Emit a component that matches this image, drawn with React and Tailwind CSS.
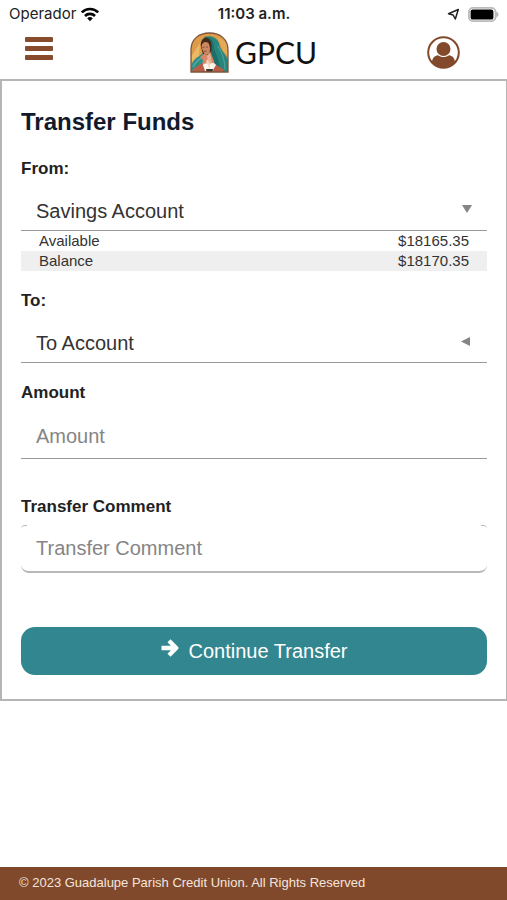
import { useState } from 'react'

function StatusBar() {
  return (
    <div className="grid h-7 grid-cols-3 items-center pl-[9px] pr-2 font-['Inter',sans-serif] text-[15px] text-[#222]">
      <div className="flex items-center gap-1">
        <span className="leading-7">Operador</span>
        <svg width="20" height="15" viewBox="0 0 20 15" fill="none" stroke="#050505" strokeWidth="2.7" aria-hidden="true">
          <path d="M1.8 5.4a11.6 11.6 0 0 1 16.4 0" />
          <path d="M5 9a7.1 7.1 0 0 1 10 0" />
          <path d="M10 14.2 7.2 11.3a4 4 0 0 1 5.6 0Z" fill="#050505" stroke="none" />
        </svg>
      </div>
      <span className="text-center font-semibold leading-7">11:03 a.m.</span>
      <div className="flex items-center justify-end gap-2">
        <svg width="13" height="13" viewBox="0 0 13 13" fill="none" stroke="#222" strokeWidth="1.5" strokeLinejoin="round" aria-hidden="true">
          <path d="M11.3 1.500 1.500 5.800l4.600 1.200 2.200 4Z" />
        </svg>
        <svg width="31" height="15" viewBox="0 0 31 15" aria-hidden="true">
          <rect x="0.9" y="0.9" width="26.600" height="13.200" rx="4" fill="#fff" stroke="#bbb" strokeWidth="1.8" />
          <rect x="2.6" y="2.4" width="22.8" height="10.2" rx="2.2" fill="#000" />
          <path d="M28.2 4.600v5.800c1.300-.5 2.300-1.600 2.300-2.900S29.500 5.100 28.200 4.600Z" fill="#b5b5b5" />
        </svg>
      </div>
    </div>
  )
}

function Logo() {
  return (
    <svg width="39" height="41" viewBox="0 0 39 41" aria-hidden="true">
      <defs>
        <clipPath id="arch">
          <path d="M1 40V18C1 7 9 1 19.500 1S38 7 38 18v22Z" />
        </clipPath>
      </defs>
      <g clipPath="url(#arch)">
        <rect width="39" height="41" fill="#dc9c4c" />
        <path d="M1 25 10 11 9 24 2 30Z" fill="#ebb966" />
        <path d="M28 5l11 8v12l-6-6Z" fill="#e3ab58" />
        <path d="M1 38c0-7 3-11 7-13l5-4 6 19H1Z" fill="#2f8f88" />
        <path d="M12 8c4-6 14-5 17 3 1 5 3 7 5 10 4 5 5 10 5 19H27l-4-12-3-12Z" fill="#27857d" />
        <path d="M14 5c8-2 10 6 10 12 3 7 6 13 6 23h-3c-1-7-6-12-7-19l-2-12Z" fill="#1b6f69" />
        <path d="M28 14c4 7 7 13 7 24" fill="none" stroke="#4aa197" strokeWidth="1.2" />
        <path d="M3 35c2-5 5-6 8-9" fill="none" stroke="#58aaa0" strokeWidth="1.2" />
        <path d="M11 15c-1-5 2-10 6-9 5 1 5 9 4 14l-3 3-5-1Z" fill="#452719" />
        <path d="M11.500 14c1-4 4-5 7-3 2 4 2 8 0 11-2 1-4 1-5-2-1-2-2-4-2-6Z" fill="#cb8962" />
        <path d="M12.500 15.300h2M16 15h2M14 19.200h2.500" fill="none" stroke="#78432d" strokeWidth=".8" />
        <path d="M14 22l4 1 2-4 4 10 2 11H11l2-12-3-3Z" fill="#d88568" />
        <path d="M17 24l3-3 2 10-3 3Z" fill="#eab092" />
        <path d="M3 37l9-6 4 9H2ZM25 32l8 5 1 3H23Z" fill="#b85d47" />
        <path d="M17 27c2 2 3 5 3 8l-1 3-2-3c-1-3-1-5 0-8Z" fill="#f6d5bf" />
        <path d="M13 33c1-2 4-2 5 0l1 4-4 2ZM20 32c2-2 5-1 6 1l-3 5-4-1Z" fill="#fff5ed" />
        <path d="M16 37h7l-1 4h-5Z" fill="#343b3a" />
      </g>
      <path d="M1 40V18C1 7 9 1 19.500 1S38 7 38 18v22Z" fill="none" stroke="#80543a" strokeWidth="1.3" />
    </svg>
  )
}

function Header() {
  return (
    <header className="grid h-[51px] grid-cols-[1fr_auto_1fr] items-start px-[25px] pt-1">
      <button type="button" aria-label="Menu" className="flex w-7 flex-col gap-1 pt-[5px]">
        <span className="h-[5px] w-7 rounded-[1px] bg-[#864c2c]" />
        <span className="h-[5px] w-7 rounded-[1px] bg-[#864c2c]" />
        <span className="h-[5px] w-7 rounded-[1px] bg-[#864c2c]" />
      </button>
      <a href="#home" className="flex gap-1.5">
        <Logo />
        <span className="font-['Lato',sans-serif] text-[30px] leading-10 text-[#111]">GPCU</span>
      </a>
      <button type="button" aria-label="Profile" className="mr-[22px] mt-1 justify-self-end">
        <svg width="33" height="33" viewBox="0 0 33 33" aria-hidden="true">
          <circle cx="16.500" cy="16.500" r="15.300" fill="#fff" stroke="#824a2b" strokeWidth="2" />
          <circle cx="16.500" cy="13" r="7" fill="#824a2b" />
          <path d="M5 26c.4-4 2.600-6.500 6-6.800 3 2.400 8 2.400 11 0 3.400.3 5.600 2.800 6 6.800a15 15 0 0 1-23 0Z" fill="#824a2b" />
        </svg>
      </button>
    </header>
  )
}

function AccountSelect({ id, label, open, options }) {
  return (
    <div>
      <label htmlFor={id} className="block text-[17px] font-bold leading-6">{label}</label>
      <div className="relative mt-2.5">
        <select id={id} className="block h-10 w-full appearance-none border-b border-[#999] bg-transparent px-[15px] text-[20px] text-[#333] outline-none">
          {options.map((option) => (
            <option key={option}>{option}</option>
          ))}
        </select>
        <svg className="pointer-events-none absolute right-3.5 top-3" width="12" height="12" viewBox="0 0 12 12" fill="#858585" aria-hidden="true">
          {open ? <path d="M1 2h10L6 10Z" /> : <path d="M9 2v9L0 6.500Z" />}
        </svg>
      </div>
    </div>
  )
}

function App() {
  const [amount, setAmount] = useState('')
  const [comment, setComment] = useState('')

  return (
    <div className="flex min-h-screen flex-col bg-white font-['Liberation_Sans',Arial,sans-serif] text-[#222]">
      <StatusBar />
      <Header />

      <main className="border-2 border-r border-[#b5b5b5] px-[19px] pb-6 pt-[23px]">
        <h1 className="text-2xl font-bold leading-9 text-[#111a2c]">Transfer Funds</h1>

        <form className="mt-[17px]" onSubmit={(e) => e.preventDefault()}>
          <AccountSelect id="from" label="From:" open options={['Savings Account']} />
          <table className="mb-[18px] w-full text-[15px] leading-5 text-[#333]">
            <tbody>
              <tr>
                <th scope="row" className="pl-[18px] text-left font-normal">Available</th>
                <td className="pr-[18px] text-right">$18165.35</td>
              </tr>
              <tr className="bg-[#efefef]">
                <th scope="row" className="pl-[18px] text-left font-normal">Balance</th>
                <td className="pr-[18px] text-right">$18170.35</td>
              </tr>
            </tbody>
          </table>

          <AccountSelect id="to" label="To:" options={['To Account']} />

          <label htmlFor="amount" className="mt-[18px] block text-[17px] font-bold leading-6">Amount</label>
          <input
            id="amount"
            type="text"
            placeholder="Amount"
            value={amount}
            onChange={(e) => setAmount(e.target.value)}
            className="mt-2.5 block h-11 w-full border-b border-[#999] px-[15px] text-[20px] outline-none placeholder:text-[#858585]"
          />

          <label htmlFor="comment" className="mt-9 block text-[17px] font-bold leading-6">Transfer Comment</label>
          <div className="relative mt-1.5">
            <input
              id="comment"
              type="text"
              placeholder="Transfer Comment"
              value={comment}
              onChange={(e) => setComment(e.target.value)}
              className="block h-12 w-full rounded-lg border-b-2 border-[#b8b8b8] px-[15px] text-[20px] outline-none placeholder:text-[#858585]"
            />
            <span className="pointer-events-none absolute left-0 top-0 h-1 w-1.5 rounded-tl-lg border-t border-[#bbb]" />
            <span className="pointer-events-none absolute right-0 top-0 h-1 w-1.5 rounded-tr-lg border-t border-[#bbb]" />
          </div>

          <button type="submit" className="mt-[54px] flex h-12 w-full items-center justify-center gap-2.5 rounded-[14px] bg-[#32868f] text-[20px] text-white">
            <svg className="mb-1.5" width="18" height="18" viewBox="0 0 18 18" fill="none" stroke="#fff" strokeWidth="4.4" strokeLinejoin="round" aria-hidden="true">
              <path d="M0.500 9h14M8 1.800 15.200 9 8 16.200" />
            </svg>
            <span>Continue Transfer</span>
          </button>
        </form>
      </main>

      <footer className="mt-auto bg-[#80492c] px-[19px] pb-[7px] pt-1.5 text-[13px] leading-5 text-[#f5e5dc]">
        © 2023 Guadalupe Parish Credit Union. All Rights Reserved
      </footer>
    </div>
  )
}

export default App
